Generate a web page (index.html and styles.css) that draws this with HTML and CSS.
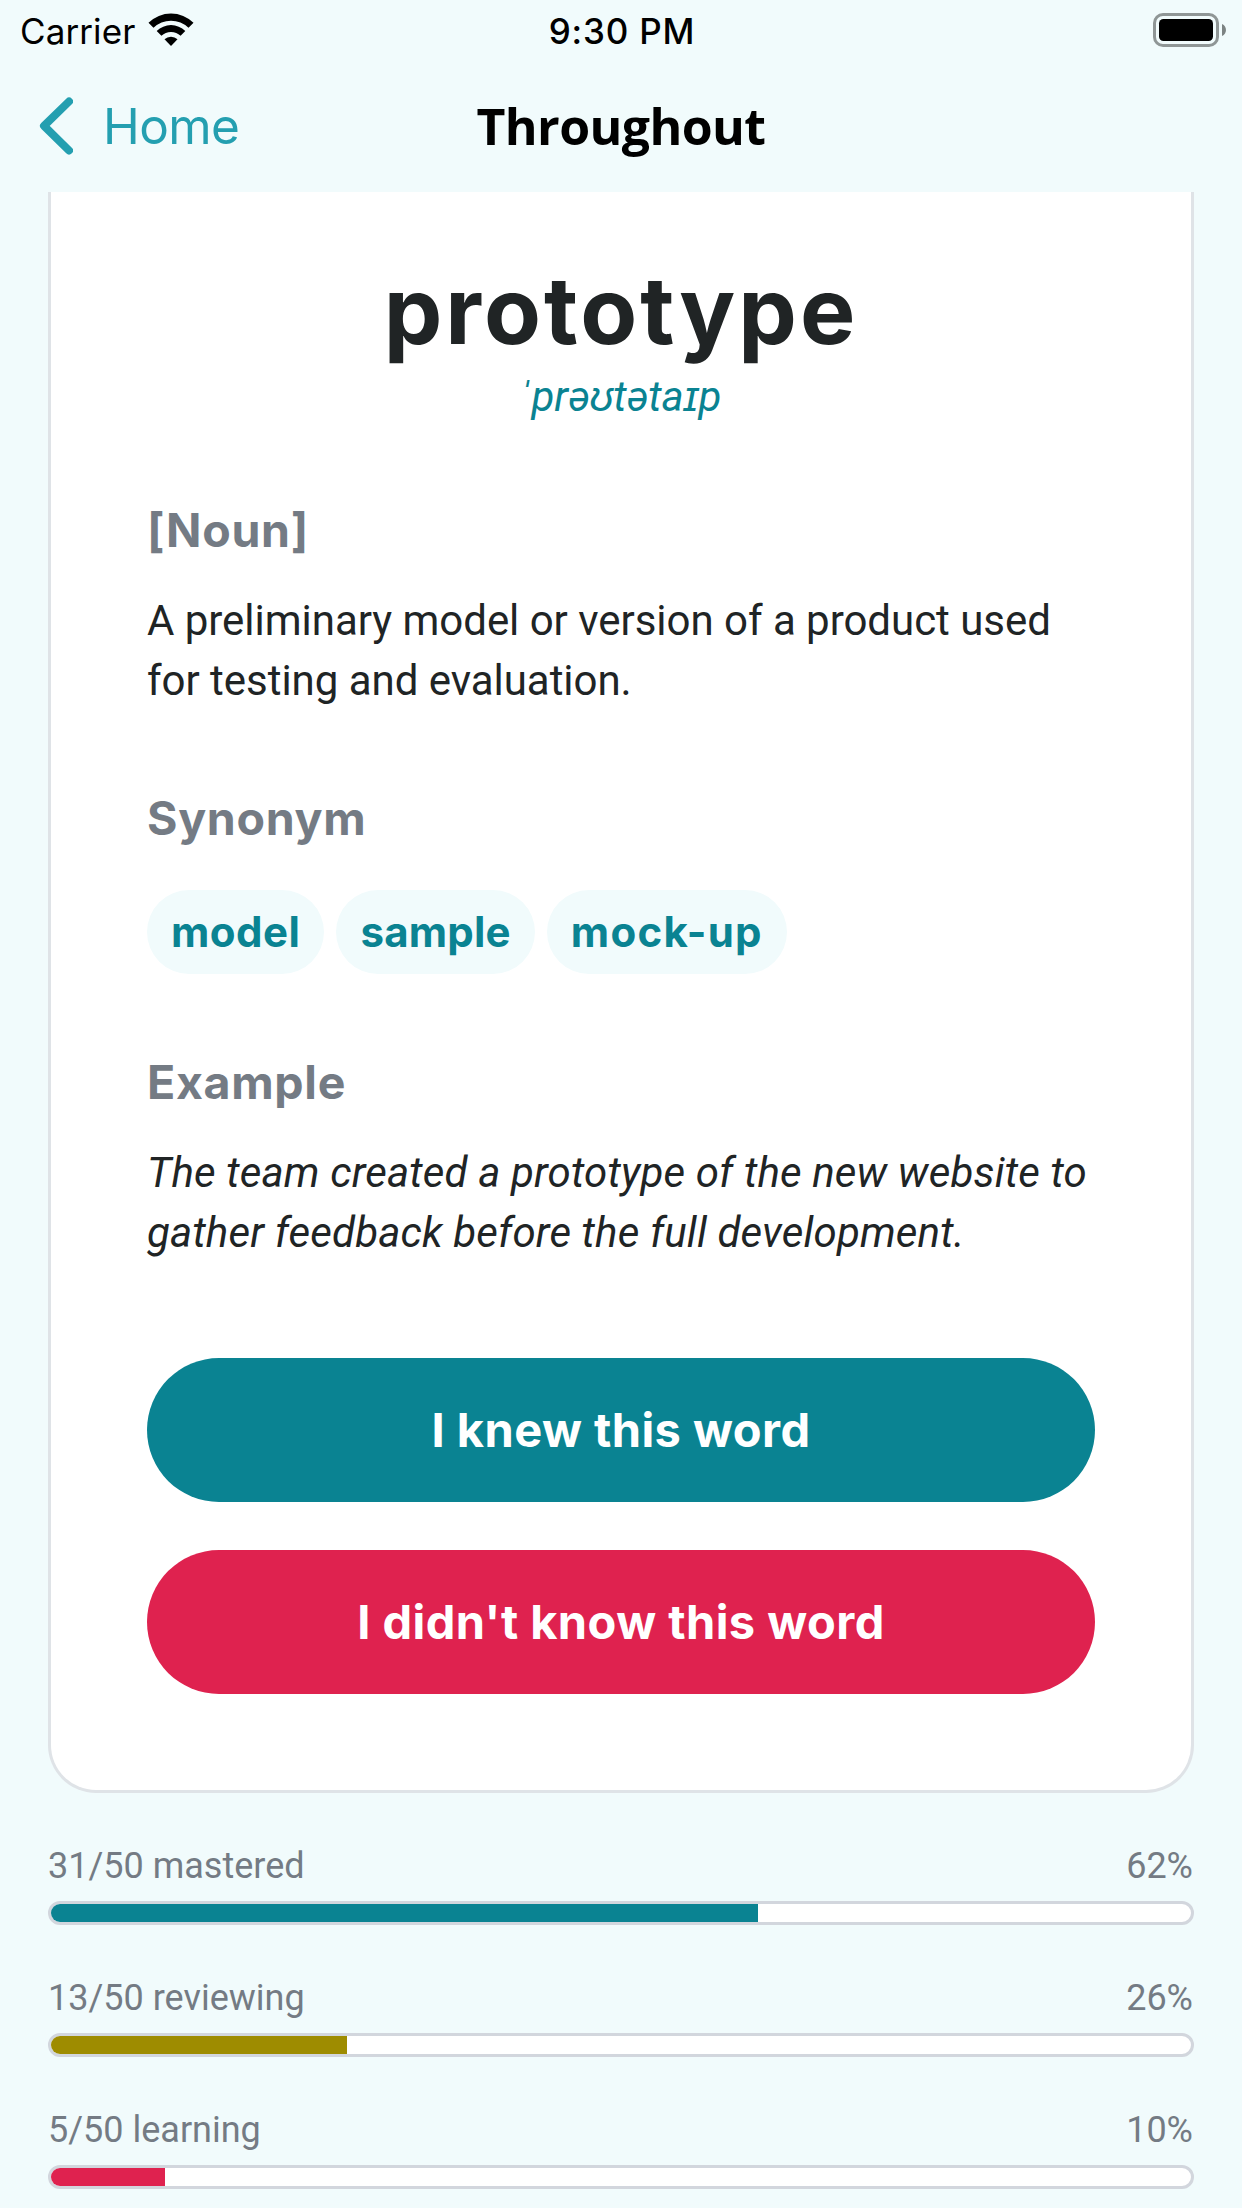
FILE: index.html
```html
<!DOCTYPE html>
<html lang="en">
<head>
<meta charset="utf-8">
<title>Throughout</title>
<link rel="stylesheet" href="styles.css">
</head>
<body>
<header class="status">
  <div class="status-left">
    <span class="carrier">Carrier</span>
    <svg class="wifi" viewBox="0 0 46 34" aria-hidden="true">
      <path d="M0.5 9.8A32 32 0 0 1 45.5 9.8L40.5 14.8A25 25 0 0 0 5.5 14.8Z"/>
      <path d="M8.7 18A20.3 20.3 0 0 1 37.3 18L32.6 22.7A14 14 0 0 0 13.4 22.7Z"/>
      <path d="M16.5 26.3A9.3 9.3 0 0 1 29.5 26.3L23 33Z"/>
    </svg>
  </div>
  <span class="time">9:30 PM</span>
  <svg class="battery" viewBox="0 0 73 34" aria-hidden="true">
    <rect x="1.5" y="1.5" width="63" height="31" rx="8.5" fill="none" stroke="#8f9696" stroke-width="3"/>
    <rect x="6" y="6" width="54" height="22" rx="4.5"/>
    <path d="M69 11c5.3 2 5.3 10 0 12z" fill="#7c8383"/>
  </svg>
</header>
<nav class="nav">
  <a class="back">
    <svg class="chevron" viewBox="0 0 34 58" aria-hidden="true"><path d="M30 4.5L5 28.8L30 53.5"/></svg>
    <span>Home</span>
  </a>
  <h1 class="title">Throughout</h1>
</nav>
<main class="content">
  <article class="card">
    <h2 class="word">prototype</h2>
    <p class="ipa">ˈprəʊtətaɪp</p>
    <section class="section definition">
      <h3 class="heading">[Noun]</h3>
      <p class="text">A preliminary model or version of a product used<br>for testing and evaluation.</p>
    </section>
    <section class="section synonyms">
      <h3 class="heading">Synonym</h3>
      <div class="pills">
        <span class="pill">model</span>
        <span class="pill pill-tight">sample</span>
        <span class="pill pill-wide">mock-up</span>
      </div>
    </section>
    <section class="section example">
      <h3 class="heading">Example</h3>
      <p class="text text-example">The team created a prototype of the new website to<br>gather feedback before the full development.</p>
    </section>
    <div class="actions">
      <button class="button button-known">I knew this word</button>
      <button class="button button-unknown">I didn't know this word</button>
    </div>
  </article>
  <section class="progress">
    <div class="progress-label"><span>31/50 mastered</span><span>62%</span></div>
    <div class="track"><div class="fill mastered" style="width:62%"></div></div>
  </section>
  <section class="progress">
    <div class="progress-label"><span>13/50 reviewing</span><span>26%</span></div>
    <div class="track"><div class="fill reviewing" style="width:26%"></div></div>
  </section>
  <section class="progress">
    <div class="progress-label"><span>5/50 learning</span><span>10%</span></div>
    <div class="track"><div class="fill learning" style="width:10%"></div></div>
  </section>
</main>
</body>
</html>
```
FILE: styles.css
```css
* { box-sizing: border-box; margin: 0; padding: 0; }

body {
  width: 1242px;
  height: 2208px;
  overflow: hidden;
  background: #f1fbfc;
  font-family: Roboto, "Liberation Sans", sans-serif;
  color: #202425;
}

.status {
  display: grid;
  grid-template-columns: 1fr auto 1fr;
  height: 62px;
  padding: 0 16px 0 20px;
  font: 400 35px/62px Inter, sans-serif;
  color: #000;
}
.status-left { display: flex; gap: 13px; }
.carrier { letter-spacing: 0.1px; }
.wifi { width: 46px; height: 34px; margin-top: 13px; }
.time { margin-right: 2px; font-weight: 550; letter-spacing: 0.8px; }
.battery { width: 73px; height: 34px; margin-top: 13px; justify-self: end; }

.nav {
  display: grid;
  grid-template-columns: 1fr auto 1fr;
  height: 130px;
  padding: 0 39px;
}
.back {
  display: flex;
  gap: 30px;
  font: 400 49.5px/128px Inter, sans-serif;
  letter-spacing: -0.6px;
  color: #249fb0;
}
.chevron { width: 34px; height: 58px; margin-top: 35px; fill: none; stroke: #249fb0; stroke-width: 8; stroke-linecap: round; stroke-linejoin: round; }
.title { font: 700 50px/128px "Open Sans", sans-serif; letter-spacing: -0.6px; color: #000; }

.content { padding: 0 48px; }
.card {
  padding: 60px 96px 96px;
  border: 3px solid #dfe3e7;
  border-top: 0;
  border-radius: 0 0 48px 48px;
  background: #fff;
}
.word {
  font: 720 93px/116px Inter, sans-serif;
  letter-spacing: 3px;
  text-align: center;
}
.ipa { padding-right: 3px; font-size: 42px; font-style: italic; line-height: 57px; text-align: center; color: #0a8392; }
.definition { margin-top: 75px; }
.synonyms { margin-top: 77px; }
.example { margin-top: 78px; }
.heading { font: 700 46.5px/60px Inter, sans-serif; letter-spacing: 0.7px; color: #747b84; }
.text { margin-top: 31px; font-size: 42px; line-height: 60px; letter-spacing: -0.03px; white-space: nowrap; }
.text-example { font-style: italic; letter-spacing: 0.16px; }

.pills { display: flex; gap: 12px; margin-top: 42px; }
.pill {
  padding: 0 24px;
  border-radius: 42px;
  background: #f1fbfc;
  font: 700 42px/84px Inter, sans-serif;
  letter-spacing: 0.5px;
  color: #0a8392;
}
.pill-tight { letter-spacing: 0.2px; }
.pill-wide { letter-spacing: 1.3px; }

.actions { display: flex; flex-direction: column; gap: 48px; margin-top: 95px; }
.button {
  height: 144px;
  border: 0;
  border-radius: 72px;
  font: 650 47px/142px Inter, sans-serif;
  letter-spacing: 0.45px;
  color: #fff;
}
.button-known { background: #0a8392; }
.button-unknown { background: #df224f; }

.progress { margin-top: 52px; }
.progress-label {
  display: flex;
  justify-content: space-between;
  padding-right: 1px;
  font-size: 36px;
  line-height: 42px;
  color: #747b84;
}
.track {
  height: 24px;
  margin-top: 14px;
  border: 3px solid #d2d6dd;
  border-radius: 12px;
  background: #fff;
  overflow: hidden;
}
.fill { height: 100%; }
.mastered { background: #0a8392; }
.reviewing { background: #9e8c00; }
.learning { background: #df224f; }
```
